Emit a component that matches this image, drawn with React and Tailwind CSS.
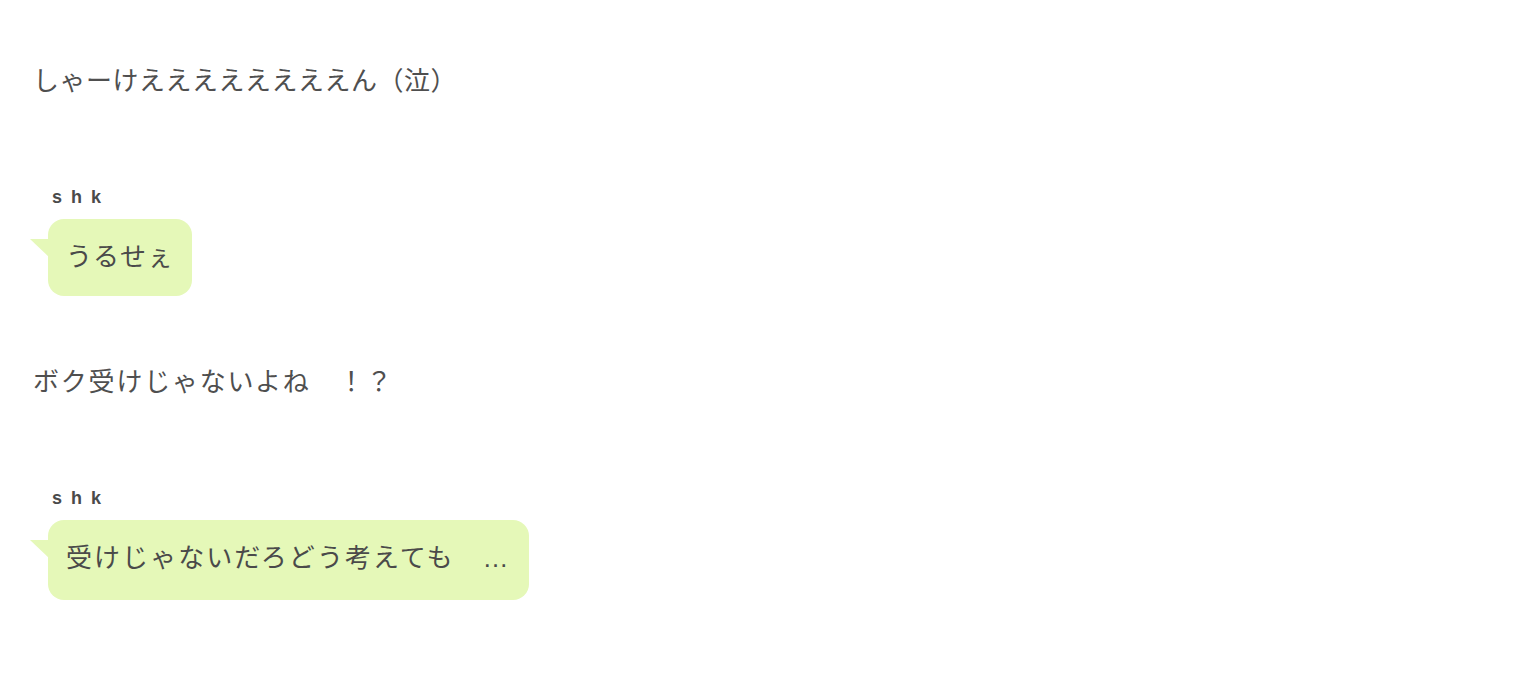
const lines = [
  {
    text: 'しゃーけええええええええん（泣）',
    track: 'tracking-[0.5px]',
    reply: ['うるせぇ', ''],
    replyTrack: 'tracking-[1px]',
  },
  {
    text: 'ボク受けじゃないよね　！？',
    track: 'tracking-[1.8px]',
    reply: ['受けじゃないだろどう考えても　', '…'],
    replyTrack: 'tracking-[2.05px]',
  },
]

const Bubble = ({ name, text, track }) => (
  <div className="mt-[86px]">
    <div
      className="pl-[19px] text-[18px] leading-[24px] font-bold tracking-[0.5em] text-[#4a4a4a]"
      style={{ fontFamily: '"Liberation Sans", Arial, sans-serif' }}
    >
      {name}
    </div>
    <div className="relative mt-[10px] ml-[15px] inline-block">
      {/* tail */}
      <div className="absolute left-[-18px] top-[20px] w-0 h-0 border-t-[19px] border-t-[#e5f8b8] border-l-[20px] border-l-transparent" />
      <div className={`rounded-[16px] bg-[#e5f8b8] px-[18px] pt-[15px] pb-[21px] text-[26px] leading-[41px] text-[#4a4a4a] ${track}`}>
        {text[0]}
        {text[1] && (
          <span
            className="tracking-[2px]"
            style={{ fontFamily: '"Liberation Sans", Arial, sans-serif' }}
          >
            {text[1]}
          </span>
        )}
      </div>
    </div>
  </div>
)

export default function App() {
  return (
    <div
      className="min-h-screen bg-white pl-[33px] pt-[58px]"
      style={{ fontFamily: '"Noto Sans CJK JP", "Noto Sans", sans-serif' }}
    >
      {lines.map((l, i) => (
        <div key={i} className={i > 0 ? 'mt-[63px]' : ''}>
          <p className={`text-[26px] leading-[41px] text-[#4f4f4f] ${l.track}`}>{l.text}</p>
          <Bubble name="shk" text={l.reply} track={l.replyTrack} />
        </div>
      ))}
    </div>
  )
}
